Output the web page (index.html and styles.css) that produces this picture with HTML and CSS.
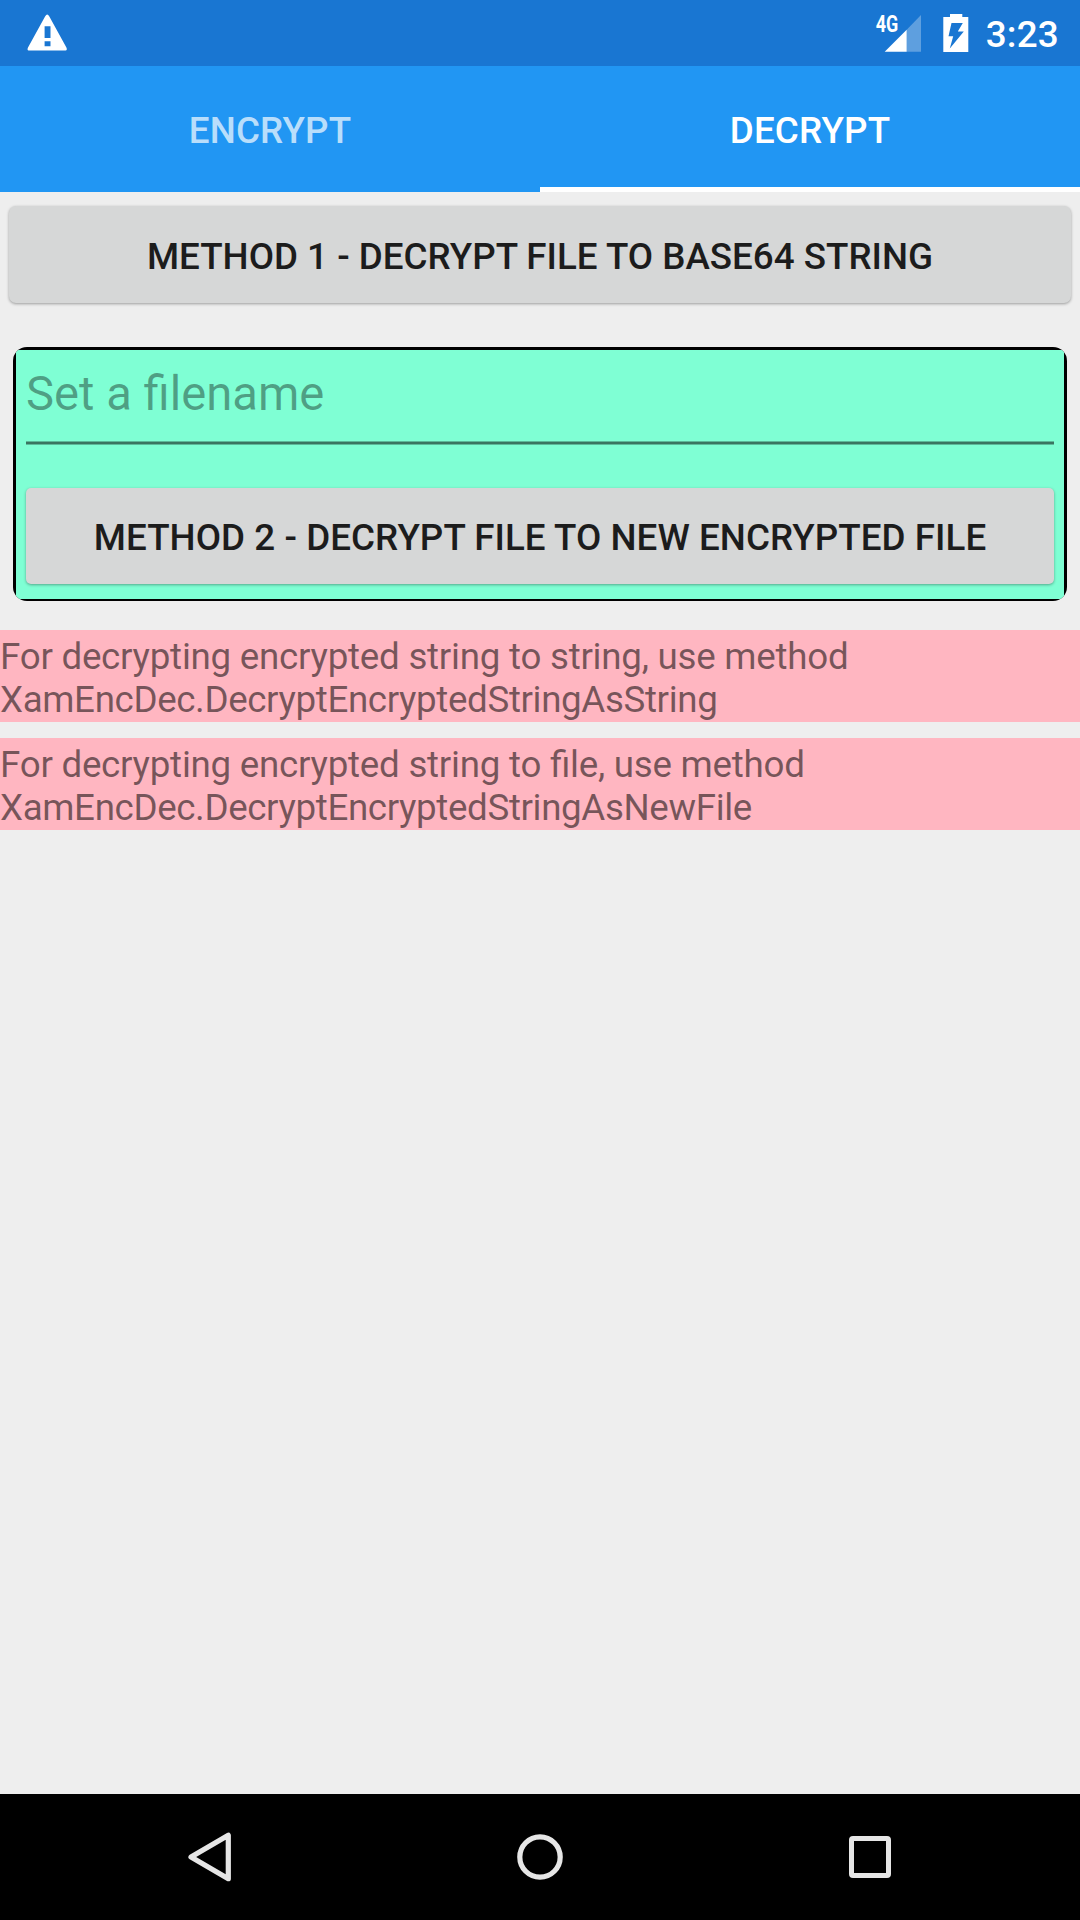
FILE: index.html
```html
<!DOCTYPE html>
<html lang="en">
<head>
<meta charset="utf-8">
<title>Decrypt</title>
<link rel="stylesheet" href="styles.css">
</head>
<body>
<div class="screen">
  <header class="status-bar">
    <svg class="warning-icon" width="48" height="48" viewBox="0 0 48 48">
      <path fill="#fff" fill-rule="evenodd" d="M22.2 7.2Q24.2 4 26.2 7.2L43.4 38.6Q44.6 41.4 42.6 41.4H5.6Q3.8 41.4 5 38.6ZM21.6 17.3V29H27.5V17.3ZM21.6 32.3V37.2H27.5V32.3Z"/>
    </svg>
    <div class="status-right">
      <svg class="signal-icon" width="48" height="48" viewBox="0 0 48 48">
        <path fill="#fff" fill-opacity=".3" d="M31.7 20.7L46 6V42.7H31.7Z"/>
        <path fill="#fff" d="M9.7 42.7L31.7 20.7V42.7Z"/>
        <text class="network-label" x=".8" y="22.6" textLength="22.5" lengthAdjust="spacingAndGlyphs">4G</text>
      </svg>
      <svg class="battery-icon" width="26" height="48" viewBox="0 0 26 48">
        <path fill="#fff" fill-rule="evenodd" d="M7 5H19.3V8H25.3V43H.3V8H7ZM8.5 14L5.5 27.3H10.2L6.8 39.5L20.8 22.6H14.8L19.8 14Z"/>
      </svg>
      <span class="clock">3:23</span>
    </div>
  </header>
  <nav class="tabs">
    <div class="tab">ENCRYPT</div>
    <div class="tab tab-active">DECRYPT</div>
  </nav>
  <main class="content">
    <button class="button button-wide">METHOD 1 - DECRYPT FILE TO BASE64 STRING</button>
    <section class="frame">
      <div class="frame-body">
        <div class="entry">Set a filename</div>
        <button class="button button-framed">METHOD 2 - DECRYPT FILE TO NEW ENCRYPTED FILE</button>
      </div>
    </section>
    <p class="note">For decrypting encrypted string to string, use method<br><span class="method-name">XamEncDec.DecryptEncryptedStringAsString</span></p>
    <p class="note">For decrypting encrypted string to file, use method<br><span class="method-name">XamEncDec.DecryptEncryptedStringAsNewFile</span></p>
  </main>
  <footer class="nav-bar">
    <svg width="50" height="56" viewBox="0 0 50 56"><path d="M43.3 6.3V49.7L6 28Z" fill="none" stroke="#e6e6e6" stroke-width="5.2" stroke-linejoin="round"/></svg>
    <svg width="50" height="56" viewBox="0 0 50 56"><circle cx="25" cy="28" r="20.2" fill="none" stroke="#e6e6e6" stroke-width="5.2"/></svg>
    <svg width="50" height="56" viewBox="0 0 50 56"><rect x="6.5" y="9.5" width="37" height="37" rx="1.5" fill="none" stroke="#e6e6e6" stroke-width="5"/></svg>
  </footer>
</div>
</body>
</html>
```
FILE: styles.css
```css
* { box-sizing: border-box; }
body {
  margin: 0;
  font-family: Roboto, sans-serif;
  font-size: 36.75px;
  line-height: 43px;
}
svg { display: block; flex: none; }
.screen {
  display: flex;
  flex-direction: column;
  width: 1080px;
  height: 1920px;
  background: #eee;
}
.status-bar {
  display: flex;
  justify-content: space-between;
  height: 66px;
  padding: 9px 21px 9px 23px;
  background: #1976d2;
  color: #fff;
}
.status-right { display: flex; }
.battery-icon { margin-left: 20px; }
.clock {
  margin-left: 17px;
  padding-top: 4px;
  font-weight: 500;
  letter-spacing: .25px;
}
.network-label {
  font-size: 23px;
  font-weight: 700;
  fill: #fff;
}
.tabs {
  display: flex;
  height: 126px;
  background: #2196f3;
}
.tab {
  flex: 1;
  padding-top: 43px;
  text-align: center;
  font-weight: 500;
  letter-spacing: .15px;
  color: rgba(255, 255, 255, .7);
}
.tab-active {
  color: #fff;
  border-bottom: 5px solid #fff;
}
.content { flex: 1; padding-top: 14px; }
.button {
  display: block;
  width: 100%;
  height: 96px;
  padding: 2px 0 0;
  border: 0;
  border-radius: 5px;
  background: #d6d7d7;
  box-shadow: 0 1px 3px rgba(0, 0, 0, .35);
  color: #1c1c1c;
  font: 500 36.75px/43px Roboto, sans-serif;
}
.button-wide {
  width: 1062px;
  height: 97px;
  margin: 0 9px;
  padding-top: 3px;
  border-radius: 7px;
}
.button-framed { letter-spacing: .05px; }
.frame {
  height: 254px;
  margin: 44px 13px 29px;
  padding: 3px 3px 2px;
  border-radius: 14px;
  overflow: hidden;
  background: #000;
}
.frame-body {
  height: 249px;
  padding: 16px 10px 0;
  background: #7fffd4;
}
.entry {
  height: 79px;
  margin-bottom: 43px;
  background: linear-gradient(#5cb999 1px, #3a7561 1px 3px, #5cb999 3px) bottom / 100% 4px no-repeat;
  font-size: 47.2px;
  line-height: 56px;
  color: rgba(0, 0, 0, .38);
}
.note {
  height: 92px;
  margin: 0 0 16px;
  padding-top: 5px;
  background: #ffb6c1;
  letter-spacing: -.26px;
  font-feature-settings: "liga" 1;
  color: rgba(0, 0, 0, .54);
}
.method-name { letter-spacing: -.38px; }
.nav-bar {
  display: flex;
  justify-content: center;
  gap: 280px;
  height: 126px;
  padding-top: 35px;
  background: #000;
}
```
